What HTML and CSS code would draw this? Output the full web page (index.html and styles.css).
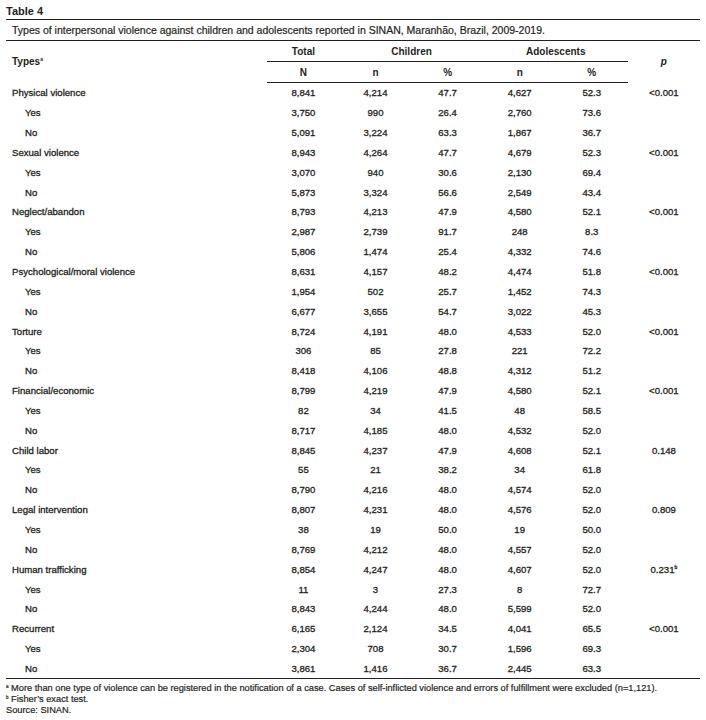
FILE: index.html
```html
<!DOCTYPE html>
<html>
<head>
<meta charset="utf-8">
<link rel="stylesheet" href="styles.css">
</head>
<body>
<div class="wrap">
<div class="tlabel">Table 4</div>
<table class="tbl">
<colgroup>
<col class="c-type"><col class="c-num"><col class="c-num"><col class="c-num"><col class="c-num"><col class="c-num"><col class="c-num">
</colgroup>
<thead>
<tr class="cap"><th colspan="7">Types of interpersonal violence against children and adolescents reported in SINAN, Maranhão, Brazil, 2009-2019.</th></tr>
<tr class="h1">
<th rowspan="2" class="htype">Types<sup>a</sup></th>
<th class="grp">Total</th>
<th colspan="2" class="grp">Children</th>
<th colspan="2" class="grp">Adolescents</th>
<th rowspan="2" class="hp"><i>p</i></th>
</tr>
<tr class="h2">
<th>N</th><th>n</th><th>%</th><th>n</th><th>%</th>
</tr>
</thead>
<tbody>
<tr class="cat"><td>Physical violence</td><td>8,841</td><td>4,214</td><td>47.7</td><td>4,627</td><td>52.3</td><td>&lt;0.001</td></tr>
<tr class="sub"><td>Yes</td><td>3,750</td><td>990</td><td>26.4</td><td>2,760</td><td>73.6</td><td></td></tr>
<tr class="sub"><td>No</td><td>5,091</td><td>3,224</td><td>63.3</td><td>1,867</td><td>36.7</td><td></td></tr>
<tr class="cat"><td>Sexual violence</td><td>8,943</td><td>4,264</td><td>47.7</td><td>4,679</td><td>52.3</td><td>&lt;0.001</td></tr>
<tr class="sub"><td>Yes</td><td>3,070</td><td>940</td><td>30.6</td><td>2,130</td><td>69.4</td><td></td></tr>
<tr class="sub"><td>No</td><td>5,873</td><td>3,324</td><td>56.6</td><td>2,549</td><td>43.4</td><td></td></tr>
<tr class="cat"><td>Neglect/abandon</td><td>8,793</td><td>4,213</td><td>47.9</td><td>4,580</td><td>52.1</td><td>&lt;0.001</td></tr>
<tr class="sub"><td>Yes</td><td>2,987</td><td>2,739</td><td>91.7</td><td>248</td><td>8.3</td><td></td></tr>
<tr class="sub"><td>No</td><td>5,806</td><td>1,474</td><td>25.4</td><td>4,332</td><td>74.6</td><td></td></tr>
<tr class="cat"><td>Psychological/moral violence</td><td>8,631</td><td>4,157</td><td>48.2</td><td>4,474</td><td>51.8</td><td>&lt;0.001</td></tr>
<tr class="sub"><td>Yes</td><td>1,954</td><td>502</td><td>25.7</td><td>1,452</td><td>74.3</td><td></td></tr>
<tr class="sub"><td>No</td><td>6,677</td><td>3,655</td><td>54.7</td><td>3,022</td><td>45.3</td><td></td></tr>
<tr class="cat"><td>Torture</td><td>8,724</td><td>4,191</td><td>48.0</td><td>4,533</td><td>52.0</td><td>&lt;0.001</td></tr>
<tr class="sub"><td>Yes</td><td>306</td><td>85</td><td>27.8</td><td>221</td><td>72.2</td><td></td></tr>
<tr class="sub"><td>No</td><td>8,418</td><td>4,106</td><td>48.8</td><td>4,312</td><td>51.2</td><td></td></tr>
<tr class="cat"><td>Financial/economic</td><td>8,799</td><td>4,219</td><td>47.9</td><td>4,580</td><td>52.1</td><td>&lt;0.001</td></tr>
<tr class="sub"><td>Yes</td><td>82</td><td>34</td><td>41.5</td><td>48</td><td>58.5</td><td></td></tr>
<tr class="sub"><td>No</td><td>8,717</td><td>4,185</td><td>48.0</td><td>4,532</td><td>52.0</td><td></td></tr>
<tr class="cat"><td>Child labor</td><td>8,845</td><td>4,237</td><td>47.9</td><td>4,608</td><td>52.1</td><td>0.148</td></tr>
<tr class="sub"><td>Yes</td><td>55</td><td>21</td><td>38.2</td><td>34</td><td>61.8</td><td></td></tr>
<tr class="sub"><td>No</td><td>8,790</td><td>4,216</td><td>48.0</td><td>4,574</td><td>52.0</td><td></td></tr>
<tr class="cat"><td>Legal intervention</td><td>8,807</td><td>4,231</td><td>48.0</td><td>4,576</td><td>52.0</td><td>0.809</td></tr>
<tr class="sub"><td>Yes</td><td>38</td><td>19</td><td>50.0</td><td>19</td><td>50.0</td><td></td></tr>
<tr class="sub"><td>No</td><td>8,769</td><td>4,212</td><td>48.0</td><td>4,557</td><td>52.0</td><td></td></tr>
<tr class="cat"><td>Human trafficking</td><td>8,854</td><td>4,247</td><td>48.0</td><td>4,607</td><td>52.0</td><td>0.231<sup>b</sup></td></tr>
<tr class="sub"><td>Yes</td><td>11</td><td>3</td><td>27.3</td><td>8</td><td>72.7</td><td></td></tr>
<tr class="sub"><td>No</td><td>8,843</td><td>4,244</td><td>48.0</td><td>5,599</td><td>52.0</td><td></td></tr>
<tr class="cat"><td>Recurrent</td><td>6,165</td><td>2,124</td><td>34.5</td><td>4,041</td><td>65.5</td><td>&lt;0.001</td></tr>
<tr class="sub"><td>Yes</td><td>2,304</td><td>708</td><td>30.7</td><td>1,596</td><td>69.3</td><td></td></tr>
<tr class="sub last"><td>No</td><td>3,861</td><td>1,416</td><td>36.7</td><td>2,445</td><td>63.3</td><td></td></tr>
</tbody>
</table>
<div class="notes">
<p><sup>a</sup> More than one type of violence can be registered in the notification of a case. Cases of self-inflicted violence and errors of fulfillment were excluded (n=1,121).</p>
<p><sup>b</sup> Fisher’s exact test.</p>
<p>Source: SINAN.</p>
</div>
</div>
</body>
</html>
```

FILE: styles.css
```css
html, body {
  margin: 0;
  padding: 0;
  background: #ffffff;
}
body {
  font-family: "Liberation Sans", Arial, sans-serif;
  color: #231f20;
}
.wrap {
  padding: 4px 6px 0 6px;
  width: 694px;
}
.tlabel {
  font-weight: bold;
  font-size: 11px;
  line-height: 14px;
  height: 15px;
  border-bottom: 1.5px solid #231f20;
}
.tbl {
  width: 694px;
  border-collapse: collapse;
  table-layout: fixed;
  font-size: 9.6px;
}
.c-type { width: 261px; }
.c-num { width: 72px; }
.tbl th, .tbl td {
  padding: 0;
  text-align: center;
  vertical-align: middle;
}
.tbl tr.cap th {
  text-align: left;
  font-weight: normal;
  font-size: 10.5px;
  height: 20px;
  padding-left: 6px;
  border-bottom: 1.5px solid #231f20;
  -webkit-text-stroke: 0.2px #231f20;
}
.tbl tr.h1 th, .tbl tr.h2 th {
  font-weight: bold;
  font-size: 10px;
  height: 20px;
}
.tbl th.grp {
  border-bottom: 1.5px solid #231f20;
}
.tbl th.htype {
  text-align: left;
  padding-left: 6px;
}
.tbl th.hp {
  font-size: 11px;
}
.tbl tr.h2 th {
  border-bottom: 1.5px solid #231f20;
}
.tbl sup {
  font-size: 5px;
  vertical-align: 4px;
  line-height: 0;
}
.tbl tbody td {
  height: 19.85px;
  -webkit-text-stroke: 0.3px #231f20;
}
.tbl tbody td:first-child {
  text-align: left;
}
.tbl tr.cat td:first-child {
  padding-left: 6px;
}
.tbl tr.sub td:first-child {
  padding-left: 19px;
}
.tbl tr.last td {
  border-bottom: 1.5px solid #231f20;
}
.notes {
  padding-top: 4px;
  font-size: 9.25px;
  line-height: 11px;
  -webkit-text-stroke: 0.2px #231f20;
}
.notes p {
  margin: 0;
}
.notes sup {
  font-size: 4.5px;
  vertical-align: 3px;
  line-height: 0;
}
```
